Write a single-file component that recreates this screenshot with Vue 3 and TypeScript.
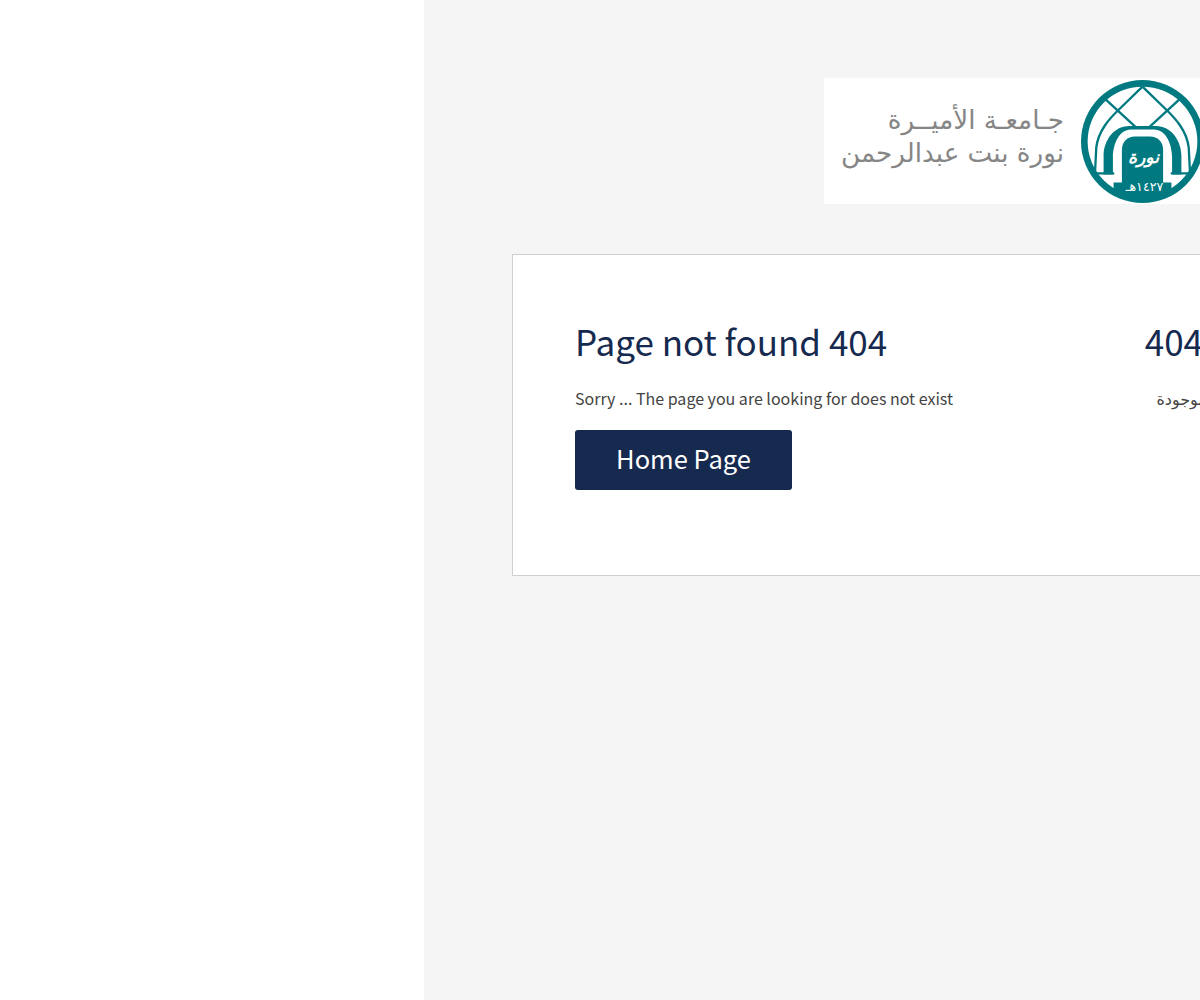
<script setup lang="ts">
const english = {
  title: 'Page not found 404',
  text: 'Sorry ... The page you are looking for does not exist',
  action: 'Home Page',
}
const arabic = {
  title: 'الصفحة غير موجودة 404',
  text: 'عذراً ... يبدو أن الصفحة التي تبحثون عنها غير موجودة',
  action: 'الصفحة الرئيسية',
}
</script>

<template>
  <div class="page">
    <aside class="side"></aside>
    <main class="panel">
      <div class="logo">
        <div class="logo-text" dir="rtl">
          <span>جـامعـة الأميــرة</span>
          <span>نورة بنت عبدالرحمن</span>
        </div>
        <svg class="seal" viewBox="20 12 370 370" width="123" height="123" aria-hidden="true">
          <defs>
            <clipPath id="sealClip"><circle cx="205" cy="197" r="170" /></clipPath>
          </defs>
          <circle cx="205" cy="197" r="185" fill="#007a80" />
          <circle cx="205" cy="197" r="165" fill="#fff" />
          <g clip-path="url(#sealClip)" fill="none" stroke="#007a80" stroke-width="7">
            <path d="M205 32L138 97C105 128 72 165 66 215L62 293" />
            <path d="M205 32L272 97C305 128 338 165 344 215L348 293" />
            <path d="M85 62L183 152" />
            <path d="M325 62L227 152" />
            <path d="M30 293H120" />
            <path d="M380 293H290" />
          </g>
          <g clip-path="url(#sealClip)">
            <path fill-rule="evenodd" fill="#007a80" d="M88 296V240C88 195 118 150 165 150H245C292 150 322 195 322 240V296H294V245C294 205 275 161 240 161H170C135 161 116 205 116 245V296Z" />
            <path d="M143 325V222C143 198 160 182 182 182H228C250 182 267 198 267 222V325Z" fill="#007a80" />
            <path d="M118 320H292V390H118Z" fill="#007a80" />
          </g>
          <text x="208" y="262" class="seal-name" text-anchor="middle">نورة</text>
          <text x="211" y="346" class="seal-year" text-anchor="middle">١٤٢٧هـ</text>
        </svg>
      </div>

      <section class="card">
        <div class="column">
          <h1>{{ english.title }}</h1>
          <p>{{ english.text }}</p>
          <a class="action">{{ english.action }}</a>
        </div>
        <div class="column" dir="rtl">
          <h1>{{ arabic.title }}</h1>
          <p>{{ arabic.text }}</p>
          <a class="action">{{ arabic.action }}</a>
        </div>
      </section>
    </main>
  </div>
</template>

<style>
html,
body {
  margin: 0;
  background: #fff;
}
</style>

<style scoped>
.page {
  display: flex;
  width: 1200px;
  height: 1000px;
  overflow: hidden;
  font-family: "Noto Sans CJK SC", "DejaVu Sans", sans-serif;
}
.side {
  flex: 0 0 424px;
  background: #fff;
}
.panel {
  flex: 0 0 1180px;
  box-sizing: border-box;
  background: #f5f5f5;
  padding: 78px 0 0 88px;
}
.logo {
  display: flex;
  align-items: center;
  justify-content: flex-end;
  gap: 17px;
  box-sizing: border-box;
  width: 384px;
  height: 126px;
  margin-left: 312px;
  background: #fff;
}
.logo-text {
  display: flex;
  flex-direction: column;
  padding-bottom: 8px;
  font-family: "DejaVu Sans", sans-serif;
  font-size: 26.2px;
  line-height: 33px;
  color: #868686;
}
.seal {
  flex: none;
  margin-right: 4px;
}
.seal-name {
  font-family: "DejaVu Sans", sans-serif;
  font-size: 52px;
  font-style: italic;
  font-weight: 700;
  fill: #fff;
}
.seal-year {
  font-family: "DejaVu Sans", sans-serif;
  font-size: 38px;
  fill: #fff;
}
.card {
  display: flex;
  justify-content: space-between;
  box-sizing: border-box;
  width: 1046px;
  height: 322px;
  margin-top: 50px;
  padding: 60px 62px;
  border: 1px solid #cfcfcf;
  background: #fff;
}
.column {
  display: flex;
  flex-direction: column;
  align-items: flex-start;
}
h1 {
  margin: 0;
  font-size: 35px;
  font-weight: 400;
  line-height: 52px;
  color: #16294f;
}
p {
  margin: 18px 0 0;
  font-size: 16px;
  line-height: 27px;
  color: #444;
}
.action {
  display: flex;
  align-items: center;
  justify-content: center;
  box-sizing: border-box;
  width: 217px;
  height: 60px;
  margin-top: 18px;
  padding-bottom: 5px;
  border-radius: 3px;
  background: #16294f;
  color: #fff;
  font-size: 25.5px;
}
</style>
